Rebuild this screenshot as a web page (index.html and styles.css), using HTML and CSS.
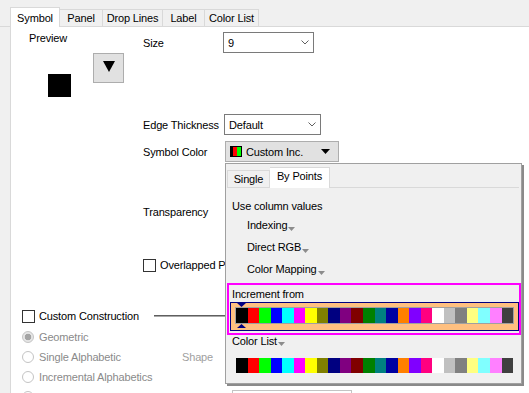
FILE: index.html
```html
<!DOCTYPE html>
<html>
<head>
<meta charset="utf-8">
<link rel="stylesheet" href="styles.css">
</head>
<body>
<div class="dialog">
  <div class="tabs">
    <div class="tab first active w-symbol">Symbol</div>
    <div class="tab w-panel">Panel</div>
    <div class="tab w-drop">Drop Lines</div>
    <div class="tab w-label">Label</div>
    <div class="tab w-clist">Color List</div>
  </div>
  <div class="page">
    <div class="top">
      <div class="left">
        <div class="preview-label">Preview</div>
        <div class="preview-row">
          <div class="preview-square"></div>
          <div class="preview-btn"><svg width="12" height="11" viewBox="0 0 12 11"><polygon points="0,0 12,0 6,11" fill="#000"/></svg></div>
        </div>
      </div>
      <div class="right">
        <div class="row r-size">
          <span class="lbl">Size</span>
          <div class="combo combo-size"><span>9</span><svg class="chev" width="8" height="5" viewBox="0 0 8 5"><polyline points="0.5,0.5 4,4 7.5,0.5" fill="none" stroke="#606060"/></svg></div>
        </div>
        <div class="row r-edge">
          <span class="lbl">Edge Thickness</span>
          <div class="combo combo-edge"><span>Default</span><svg class="chev" width="8" height="5" viewBox="0 0 8 5"><polyline points="0.5,0.5 4,4 7.5,0.5" fill="none" stroke="#606060"/></svg></div>
        </div>
        <div class="row r-color">
          <span class="lbl">Symbol Color</span>
          <div class="cbtn"><span class="swatch-icon"></span><span class="cbtn-text">Custom Inc.</span><svg class="cbtn-arrow" width="9" height="5" viewBox="0 0 9 5"><polygon points="0,0 9,0 4.5,5" fill="#000"/></svg></div>
        </div>
        <div class="row r-trans">
          <span class="lbl">Transparency</span>
        </div>
        <div class="row r-overlap">
          <span class="check"></span><span class="check-text">Overlapped P</span>
        </div>
      </div>
    </div>

    <div class="construct">
      <div class="cc"><span class="check"></span><span class="check-text">Custom Construction</span></div>
      <div class="hr"></div>
    </div>

    <div class="radios">
      <div class="radio on rr1"><span class="dot"></span>Geometric</div>
      <div class="radio rr2"><span class="dot"></span>Single Alphabetic</div>
      <div class="radio rr3"><span class="dot"></span>Incremental Alphabetics</div>
      <div class="radio rr4"><span class="dot"></span>Base Number Numeric</div>
      <div class="shape">Shape</div>
      <div class="bcombo"></div>
    </div>

    <div class="popup">
      <div class="ptabs">
        <div class="ptab first w-single">Single</div>
        <div class="ptab active w-bypoints">By Points</div>
      </div>
      <div class="pl use">Use column values</div>
      <div class="opt opt1">Indexing<svg width="7" height="4" viewBox="0 0 7 4"><polygon points="0,0 7,0 3.5,4" fill="#8c8c8c"/></svg></div>
      <div class="opt opt2">Direct RGB<svg width="7" height="4" viewBox="0 0 7 4"><polygon points="0,0 7,0 3.5,4" fill="#8c8c8c"/></svg></div>
      <div class="opt opt3">Color Mapping<svg width="7" height="4" viewBox="0 0 7 4"><polygon points="0,0 7,0 3.5,4" fill="#8c8c8c"/></svg></div>
      <div class="hl">
        <div class="inc">Increment from</div>
        <div class="nv">
          <svg class="tri-top" width="9" height="4" viewBox="0 0 9 4"><polygon points="0,0 9,0 4.5,4" fill="#000080"/></svg>
          <div class="strip bordered">
            <span></span><span></span><span></span><span></span><span></span><span></span><span></span><span></span><span></span><span></span><span></span><span></span><span></span><span></span><span></span><span></span><span></span><span></span><span></span><span></span><span></span><span></span><span></span><span></span>
          </div>
          <svg class="tri-bot" width="9" height="4" viewBox="0 0 9 4"><polygon points="4.5,0 9,4 0,4" fill="#000080"/></svg>
        </div>
      </div>
      <div class="cl">Color List<svg width="7" height="4" viewBox="0 0 7 4"><polygon points="0,0 7,0 3.5,4" fill="#8c8c8c"/></svg></div>
      <div class="strip plain">
        <span></span><span></span><span></span><span></span><span></span><span></span><span></span><span></span><span></span><span></span><span></span><span></span><span></span><span></span><span></span><span></span><span></span><span></span><span></span><span></span><span></span><span></span><span></span><span></span>
      </div>
    </div>
  </div>
</div>
</body>
</html>
```

FILE: styles.css
```css
* { box-sizing: border-box; }
html, body { margin: 0; padding: 0; }
body {
  background: #f0f0f0;
  font-family: "Liberation Sans", Arial, sans-serif;
  font-size: 11px;
  letter-spacing: -0.15px;
  color: #000;
  width: 529px;
  height: 393px;
  overflow: hidden;
}
.dialog { height: 393px; display: flex; flex-direction: column; overflow: hidden; }

/* top tabs */
.tabs {
  height: 27px;
  flex: none;
  border-bottom: 1px solid #d9d9d9;
  display: flex;
  align-items: flex-end;
  padding-left: 10px;
}
.tab {
  height: 17px;
  padding-top: 1px;
  line-height: 15px;
  text-align: center;
  border-top: 1px solid #d9d9d9;
  border-right: 1px solid #d9d9d9;
  white-space: nowrap;
}
.tab.first { border-left: 1px solid #d9d9d9; }
.tab.active { background: #fff; height: 20px; padding-top: 3px; margin-bottom: -1px; }
.w-symbol { width: 50px; }
.w-panel { width: 43px; }
.w-drop { width: 60px; }
.w-label { width: 42px; }
.w-clist { width: 54px; }

/* main page */
.page {
  flex: 1;
  margin-left: 10px;
  background: #fff;
  border-left: 1px solid #d9d9d9;
  position: relative;
}
.top { display: flex; align-items: flex-start; }
.left { width: 132px; flex: none; }
.preview-label { margin-top: 4px; padding-left: 18px; line-height: 14px; }
.preview-row { display: flex; align-items: flex-start; margin-top: 8px; }
.preview-square { width: 23px; height: 23px; background: #000; margin-left: 37px; margin-top: 21px; }
.preview-btn {
  width: 31px; height: 30px; margin-left: 22px;
  background: #e1e1e1; border: 1px solid #adadad;
}
.preview-btn svg { display: block; margin: 7px auto 0; }

.right { flex: 1; }
.row { display: flex; align-items: center; height: 21px; }
.lbl { width: 81px; flex: none; white-space: nowrap; }
.r-size { margin-top: 5px; }
.r-edge { margin-top: 61px; }
.r-color { margin-top: 6px; }
.r-trans { margin-top: 40px; height: 20px; }
.r-overlap { margin-top: 33px; height: 20px; }

.combo {
  height: 21px;
  border: 1px solid #7a7a7a;
  background: #fff;
  display: flex;
  align-items: center;
  padding-left: 4px;
}
.combo .chev { margin-left: auto; margin-right: 4px; }
.combo-size { width: 91px; margin-left: -1px; }
.combo-edge { width: 97px; }

.cbtn {
  width: 114px; height: 21px; margin-left: 1px;
  background: #e1e1e1; border: 1px solid #adadad;
  display: flex; align-items: center; padding-left: 4px;
}
.swatch-icon {
  width: 12px; height: 11px; border: 1px solid #000;
  background: linear-gradient(to right, #000 0 2px, #f00 2px 6px, #0f0 6px 10px);
}
.cbtn-text { margin-left: 4px; }
.cbtn-arrow { margin-left: auto; margin-right: 8px; }

.check { width: 13px; height: 13px; border: 1px solid #333; background: #fff; flex: none; }
.check-text { margin-left: 4px; white-space: nowrap; }

/* custom construction */
.construct { display: flex; align-items: center; height: 20px; margin-top: 31px; }
.cc { width: 143px; flex: none; display: flex; align-items: center; padding-left: 11px; }
.hr { width: 80px; height: 2px; border-top: 1px solid #5f5f5f; border-bottom: 1px solid #a8a8a8; }

.radios {
  display: grid;
  grid-template-columns: 171px 50px 1fr;
  grid-auto-rows: 20px;
  margin-top: 1px;
  color: #8a8a8a;
}
.radio { grid-column: 1; display: flex; align-items: center; padding-left: 11px; white-space: nowrap; }
.rr1 { grid-row: 1; }
.rr2 { grid-row: 2; }
.rr3 { grid-row: 3; }
.rr4 { grid-row: 4; }
.radio .dot {
  width: 12px; height: 12px; border-radius: 50%;
  border: 1px solid #c4c4c4; background: #fff; margin-right: 5px; flex: none;
}
.radio.on .dot { background: radial-gradient(circle, #a4a4a4 0 3px, #e6e6e6 3.6px); }
.shape { grid-column: 2; grid-row: 2; display: flex; align-items: center; color: #a0a0a0; }
.bcombo {
  grid-column: 3; grid-row: 4;
  width: 120px; height: 21px; margin-top: 3px;
  border: 1px solid #c4c4c4; background: #fff;
}

/* popup */
.popup {
  position: absolute;
  left: 214px;
  top: 136px;
  width: 297px;
  height: 221px;
  background: #f0f0f0;
  border: 1px solid #a0a0a0;
  box-shadow: 2px 2px 0 #8a8a8a;
  z-index: 2;
}
.ptabs {
  display: flex; align-items: flex-end;
  height: 24px; width: 292px; margin-left: 1px;
  border-bottom: 1px solid #d9d9d9;
}
.ptab {
  height: 17px; padding-top: 1px; line-height: 15px; text-align: center;
  border-top: 1px solid #d9d9d9; border-right: 1px solid #d9d9d9;
  white-space: nowrap;
}
.ptab.first { border-left: 1px solid #d9d9d9; }
.ptab.active { background: #fff; height: 21px; margin-bottom: -1px; }
.w-single { width: 43px; }
.w-bypoints { width: 60px; }

.pl { line-height: 14px; padding-left: 6px; }
.use { margin-top: 11px; }
.opt { display: flex; height: 14px; line-height: 14px; padding-left: 21px; }
.opt svg, .cl svg { margin-top: 9px; margin-left: 1px; }
.opt1 { margin-top: 5px; }
.opt2, .opt3 { margin-top: 8px; }

.hl {
  margin-top: 7px; margin-left: 1px;
  width: 294px; height: 52px;
  border: 2px solid #ff00ff;
}
.inc { margin-top: 2px; padding-left: 3px; line-height: 14px; }
.nv {
  position: relative;
  margin: 1px 0 0 1px;
  width: 289px; height: 29px;
  border: 1px solid #000080;
  background: #ffc080;
  padding: 4px 0 0 4px;
}
.tri-top { position: absolute; left: 6px; top: 0; display: block; }
.tri-bot { position: absolute; left: 6px; top: 21px; display: block; }

.strip { display: flex; }
.strip span { flex: 1; }
.strip.bordered { width: 279px; height: 17px; border: 1px solid #a0a0a0; }
.strip.plain { width: 277px; height: 15px; margin: 10px 0 0 10px; }

.cl { display: flex; line-height: 13px; height: 13px; padding-left: 6px; }
.cl svg { margin-top: 7px; }

.strip span:nth-child(1) { background: #000000; }
.strip span:nth-child(2) { background: #ff0000; }
.strip span:nth-child(3) { background: #00ff00; }
.strip span:nth-child(4) { background: #0000ff; }
.strip span:nth-child(5) { background: #00ffff; }
.strip span:nth-child(6) { background: #ff00ff; }
.strip span:nth-child(7) { background: #ffff00; }
.strip span:nth-child(8) { background: #808000; }
.strip span:nth-child(9) { background: #000080; }
.strip span:nth-child(10) { background: #800080; }
.strip span:nth-child(11) { background: #800000; }
.strip span:nth-child(12) { background: #008000; }
.strip span:nth-child(13) { background: #008080; }
.strip span:nth-child(14) { background: #0000a0; }
.strip span:nth-child(15) { background: #ff8000; }
.strip span:nth-child(16) { background: #8000ff; }
.strip span:nth-child(17) { background: #ff0080; }
.strip span:nth-child(18) { background: #ffffff; }
.strip span:nth-child(19) { background: #c0c0c0; }
.strip span:nth-child(20) { background: #808080; }
.strip span:nth-child(21) { background: #ffff80; }
.strip span:nth-child(22) { background: #80ffff; }
.strip span:nth-child(23) { background: #ff80ff; }
.strip span:nth-child(24) { background: #404040; }
```
